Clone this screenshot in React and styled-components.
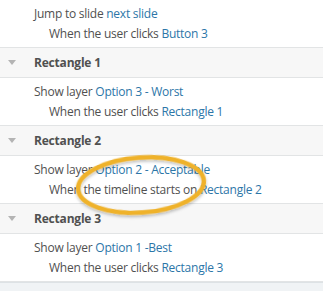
import React from "react";
import styled, { createGlobalStyle } from "styled-components";

const GlobalStyle = createGlobalStyle`
  html, body {
    margin: 0;
    padding: 0;
    background: #ffffff;
  }
  body {
    font-family: "Open Sans", "Noto Sans", "Liberation Sans", sans-serif;
  }
`;

const Panel = styled.div`
  position: relative;
  width: 323px;
  height: 291px;
  overflow: hidden;
  background: #fff;
`;

const Actions = styled.div`
  padding: 4px 0 3px 34px;
  border-bottom: 1px solid #e2e4e5;
`;

const Line = styled.div`
  height: 20px;
  line-height: 20px;
  font-size: 12px;
  letter-spacing: -0.25px;
  color: #505050;
  white-space: nowrap;
  padding-left: ${props => props.indent ? "15px" : "0"};
`;

const Ref = styled.span`
  color: #2c76a8;
`;

const Header = styled.div`
  display: flex;
  align-items: center;
  height: 29px;
  background: #f7f7f7;
  border-bottom: 1px solid #e2e4e5;
`;

const Toggle = styled.div`
  width: 34px;
  display: flex;
  justify-content: center;
  padding-right: 11px;
  box-sizing: border-box;
`;

const Arrow = styled.span`
  width: 0;
  height: 0;
  border-left: 4px solid transparent;
  border-right: 4px solid transparent;
  border-top: 5px solid #b4b4b4;
`;

const Title = styled.div`
  font-size: 12px;
  letter-spacing: -0.2px;
  font-weight: 700;
  color: #505050;
`;

const Footer = styled.div`
  height: 12px;
  border-top: 1px solid #dde2e5;
  background: #f0f3f5;
`;

const Highlight = styled.svg`
  position: absolute;
  left: 70px;
  top: 152px;
  overflow: visible;
  pointer-events: none;
`;

const groups = [
  {
    title: "Rectangle 1",
    action: ["Show layer ", "Option 3 - Worst"],
    trigger: ["When the user clicks ", "Rectangle 1"],
  },
  {
    title: "Rectangle 2",
    action: ["Show layer ", "Option 2 - Acceptable"],
    trigger: ["When the timeline starts on ", "Rectangle 2"],
  },
  {
    title: "Rectangle 3",
    action: ["Show layer ", "Option 1 -Best"],
    trigger: ["When the user clicks ", "Rectangle 3"],
  },
];

const ActionBlock = ({ action, trigger }) => (
  <Actions>
    <Line>
      {action[0]}
      <Ref>{action[1]}</Ref>
    </Line>
    <Line indent>
      {trigger[0]}
      <Ref>{trigger[1]}</Ref>
    </Line>
  </Actions>
);

export default function App() {
  return (
    <>
      <GlobalStyle />
      <Panel>
        <ActionBlock
          action={["Jump to slide ", "next slide"]}
          trigger={["When the user clicks ", "Button 3"]}
        />
        {groups.map(group => (
          <React.Fragment key={group.title}>
            <Header>
              <Toggle>
                <Arrow />
              </Toggle>
              <Title>{group.title}</Title>
            </Header>
            <ActionBlock action={group.action} trigger={group.trigger} />
          </React.Fragment>
        ))}
        <Footer />
        <Highlight width="144" height="66" viewBox="0 0 144 66">
          <defs>
            <filter id="soft" x="-20%" y="-30%" width="140%" height="160%">
              <feDropShadow dx="0" dy="2" stdDeviation="1.5" floodColor="#000" floodOpacity="0.25" />
            </filter>
          </defs>
          <ellipse
            cx="71"
            cy="33"
            rx="63"
            ry="27.5"
            transform="rotate(-4 71 33)"
            fill="none"
            stroke="#efb22c"
            strokeWidth="4.5"
            filter="url(#soft)"
          />
        </Highlight>
      </Panel>
    </>
  );
}
